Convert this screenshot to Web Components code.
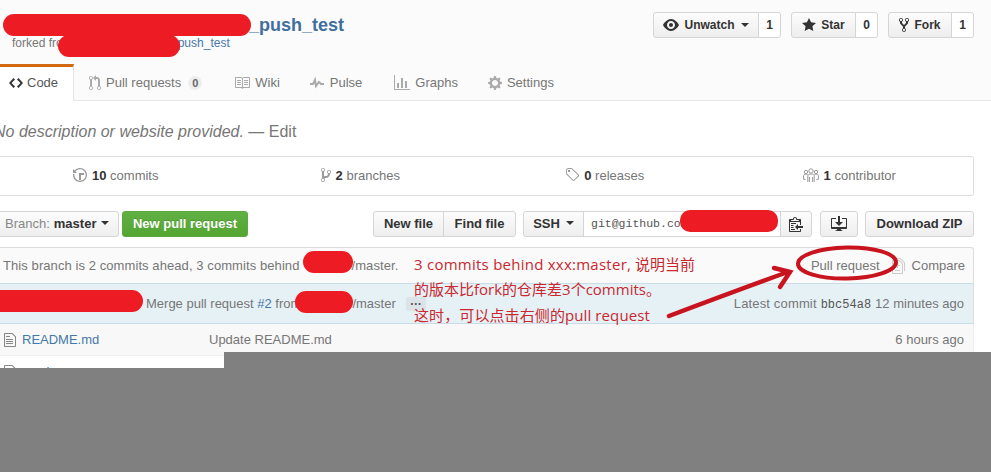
<!DOCTYPE html>
<html lang="en"><head><meta charset="utf-8"><title>push_test</title>
<style>
html,body{margin:0;padding:0;background:#fff}
body{width:991px;height:472px;overflow:hidden;position:relative;font:13px "Liberation Sans",Arial,sans-serif;color:#767676}
</style></head><body>
<x-pagehead>
  <x-title-block slot="title" link="push_test"></x-title-block>
  <x-action slot="actions" icon="eye" count="1" w="106" caret>Unwatch</x-action>
  <x-action slot="actions" icon="star" count="0" w="65">Star</x-action>
  <x-action slot="actions" icon="fork" count="1" w="64">Fork</x-action>
  <x-tab slot="tabs" icon="code" selected>Code</x-tab>
  <x-tab slot="tabs" icon="pr" counter="0">Pull requests</x-tab>
  <x-tab slot="tabs" icon="book">Wiki</x-tab>
  <x-tab slot="tabs" icon="pulse" style="gap:6px;padding-right:17px">Pulse</x-tab>
  <x-tab slot="tabs" icon="graph">Graphs</x-tab>
  <x-tab slot="tabs" icon="gear">Settings</x-tab>
</x-pagehead>
<x-repo>
  <x-desc></x-desc>
  <x-stats>
    <x-stat icon="history"><b>10</b> commits</x-stat>
    <x-stat icon="branch"><b>2</b> branches</x-stat>
    <x-stat icon="tag"><b>0</b> releases</x-stat>
    <x-stat icon="people"><b>1</b> contributor</x-stat>
  </x-stats>
  <x-toolbar></x-toolbar>
  <x-filetable></x-filetable>
</x-repo>
<x-annotations></x-annotations>
<script>
const ICONS={
eye:[16,'M8.06 2C3 2 0 8 0 8s3 6 8.06 6C13 14 16 8 16 8s-3-6-7.94-6zM8 12c-2.2 0-4-1.78-4-4 0-2.2 1.8-4 4-4 2.22 0 4 1.8 4 4 0 2.22-1.78 4-4 4zm2-4c0 1.11-.89 2-2 2-1.11 0-2-.89-2-2 0-1.11.89-2 2-2 1.11 0 2 .89 2 2z'],
star:[14,'M14 6l-4.9-.64L7 1 4.9 5.36 0 6l3.6 3.26L2.67 14 7 11.67 11.33 14l-.93-4.74L14 6z'],
fork:[10,'M8 1a1.993 1.993 0 0 0-1 3.72V6L5 8 3 6V4.72A1.993 1.993 0 0 0 2 1a1.993 1.993 0 0 0-1 3.72V6.5l3 3v1.78A1.993 1.993 0 0 0 5 15a1.993 1.993 0 0 0 1-3.72V9.5l3-3V4.72A1.993 1.993 0 0 0 8 1zM2 4.2C1.34 4.2.8 3.65.8 3c0-.65.55-1.2 1.2-1.2.65 0 1.2.55 1.2 1.2 0 .65-.55 1.2-1.2 1.2zm3 10c-.66 0-1.2-.55-1.2-1.2 0-.65.55-1.2 1.2-1.2.65 0 1.2.55 1.2 1.2 0 .65-.55 1.2-1.2 1.2zm3-10c-.66 0-1.2-.55-1.2-1.2 0-.65.55-1.2 1.2-1.2.65 0 1.2.55 1.2 1.2 0 .65-.55 1.2-1.2 1.2z'],
code:[14,'M9.5 3L8 4.5 11.5 8 8 11.5 9.5 13 14 8 9.5 3zm-5 0L0 8l4.5 5L6 11.5 2.5 8 6 4.5 4.5 3z'],
pr:[12,'M11 11.28V5c-.03-.78-.34-1.47-.94-2.06C9.46 2.35 8.78 2.03 8 2H7V0L4 3l3 3V4h1c.27.02.48.11.69.31.21.2.3.42.31.69v6.28A1.993 1.993 0 0 0 10 15a1.993 1.993 0 0 0 1-3.72zm-1 2.92c-.66 0-1.2-.55-1.2-1.2 0-.65.55-1.2 1.2-1.2.65 0 1.2.55 1.2 1.2 0 .65-.55 1.2-1.2 1.2zM4 3c0-1.11-.89-2-2-2a1.993 1.993 0 0 0-1 3.72v6.56A1.993 1.993 0 0 0 2 15a1.993 1.993 0 0 0 1-3.72V4.72c.59-.34 1-.98 1-1.72zm-.8 10c0 .66-.55 1.2-1.2 1.2-.65 0-1.2-.55-1.2-1.2 0-.65.55-1.2 1.2-1.2.65 0 1.2.55 1.2 1.2zM2 4.2C1.34 4.2.8 3.65.8 3c0-.65.55-1.2 1.2-1.2.65 0 1.2.55 1.2 1.2 0 .65-.55 1.2-1.2 1.2z'],
book:[16,'M3 5h4v1H3V5zm0 3h4V7H3v1zm0 2h4V9H3v1zm11-5h-4v1h4V5zm0 2h-4v1h4V7zm0 2h-4v1h4V9zm2-6v9c0 .55-.45 1-1 1H9.5l-1 1-1-1H2c-.55 0-1-.45-1-1V3c0-.55.45-1 1-1h5.5l1 1 1-1H15c.55 0 1 .45 1 1zm-8 .5L7.5 3H2v9h6V3.5zm7-.5H9.5l-.5.5V12h6V3z'],
pulse:[14,'M11.5 8L8.8 5.4 6.6 8.5 5.5 1.6 2.38 8H0v2h3.6l.9-1.8.9 5.4L9 8.5l1.6 1.5H14V8h-2.5z'],
graph:[16,'M16 14v1H0V0h1v14h15zM5 13H3V8h2v5zm4 0H7V3h2v10zm4 0h-2V6h2v7z'],
gear:[14,'M14 8.77v-1.6l-1.94-.64-.45-1.09.88-1.84-1.13-1.13-1.81.91-1.09-.45-.69-1.92h-1.6l-.63 1.94-1.11.45-1.84-.88-1.13 1.13.91 1.81-.45 1.09L0 7.23v1.59l1.94.64.45 1.09-.88 1.84 1.13 1.13 1.81-.91 1.09.45.69 1.92h1.59l.63-1.94 1.11-.45 1.84.88 1.13-1.13-.92-1.81.47-1.09L14 8.75v.02zM7 11c-1.66 0-3-1.34-3-3s1.34-3 3-3 3 1.34 3 3-1.34 3-3 3z'],
history:[14,'M8 13H6V6h5v2H8v5zM7 1C4.81 1 2.87 2.02 1.59 3.59L0 2v4h4L2.5 4.5C3.55 3.17 5.17 2.3 7 2.3c3.14 0 5.7 2.56 5.7 5.7s-2.56 5.7-5.7 5.7A5.71 5.71 0 0 1 1.3 8c0-.34.03-.67.09-1H.08C.03 7.33 0 7.66 0 8c0 3.86 3.14 7 7 7s7-3.14 7-7-3.14-7-7-7z'],
branch:[10,'M10 5c0-1.11-.89-2-2-2a1.993 1.993 0 0 0-1 3.72v.3c-.02.52-.23.98-.63 1.38-.4.4-.86.61-1.38.63-.83.02-1.48.16-2 .45V4.72a1.993 1.993 0 0 0-1-3.72C.88 1 0 1.89 0 3a2 2 0 0 0 1 1.72v6.56c-.59.35-1 .99-1 1.72 0 1.11.89 2 2 2 1.11 0 2-.89 2-2 0-.53-.2-1-.53-1.36.09-.06.48-.41.59-.47.25-.11.56-.17.94-.17 1.05-.05 1.95-.45 2.75-1.25S8.95 7.77 9 6.73h-.02C9.59 6.37 10 5.73 10 5zM2 1.8c.66 0 1.2.55 1.2 1.2 0 .65-.55 1.2-1.2 1.2C1.35 4.2.8 3.65.8 3c0-.65.55-1.2 1.2-1.2zm0 12.41c-.66 0-1.2-.55-1.2-1.2 0-.65.55-1.2 1.2-1.2.65 0 1.2.55 1.2 1.2 0 .65-.55 1.2-1.2 1.2zm6-8c-.66 0-1.2-.55-1.2-1.2 0-.65.55-1.2 1.2-1.2.65 0 1.2.55 1.2 1.2 0 .65-.55 1.2-1.2 1.2z'],
tag:[14,'M7.73 1.73C7.26 1.26 6.62 1 5.96 1H3.5C2.13 1 1 2.13 1 3.5v2.47c0 .66.27 1.3.73 1.77l6.06 6.06c.39.39 1.02.39 1.41 0l4.59-4.59a.996.996 0 0 0 0-1.41L7.73 1.73zM2.38 7.09c-.31-.3-.47-.7-.47-1.13V3.5c0-.88.72-1.59 1.59-1.59h2.47c.42 0 .83.16 1.13.47l6.14 6.13-4.73 4.73-6.13-6.15zM3.01 3h2v2H3V3h.01z'],
clippy:[14,'M2 13h4v1H2v-1zm5-6H2v1h5V7zm2 3V8l-3 3 3 3v-2h5v-2H9zM4.5 9H2v1h2.5V9zM2 12h2.5v-1H2v1zm9 1h1v2c-.02.28-.11.52-.3.7-.19.18-.42.28-.7.3H1c-.55 0-1-.45-1-1V4c0-.55.45-1 1-1h3c0-1.11.89-2 2-2 1.11 0 2 .89 2 2h3c.55 0 1 .45 1 1v5h-1V6H1v9h10v-2zM2 5h8c0-.55-.45-1-1-1H8c-.55 0-1-.45-1-1s-.45-1-1-1-1 .45-1 1-.45 1-1 1H3c-.55 0-1 .45-1 1z'],
download:[16,'M4 6h3V0h2v6h3l-4 4-4-4zm11-4h-4v1h4v8H1V3h4V2H1c-.55 0-1 .45-1 1v9c0 .55.45 1 1 1h5.34c-.25.61-.86 1.39-2.34 2h8c-1.48-.61-2.09-1.39-2.34-2H15c.55 0 1-.45 1-1V3c0-.55-.45-1-1-1z'],
file:[12,'M6 5H2V4h4v1zM2 8h7V7H2v1zm0 2h7V9H2v1zm0 2h7v-1H2v1zm10-7.5V14c0 .55-.45 1-1 1H1c-.55 0-1-.45-1-1V2c0-.55.45-1 1-1h7.5L12 4.5zM11 5L8 2H1v12h10V5z'],
diff:[13,'M6 7h2v1H6v2H5V8H3V7h2V5h1v2zm-3 6h5v-1H3v1zM7.5 2L11 5.5V15c0 .55-.45 1-1 1H1c-.55 0-1-.45-1-1V3c0-.55.45-1 1-1h6.5zM10 6L7 3H1v12h9V6zM8.5 0H3v1h5l4 4v8h1V4.5L8.5 0z']
};
const PEOPLE='<g fill="none" stroke="currentColor" stroke-width="1"><circle cx="8" cy="4" r="2.2"/><path d="M4.8 15V9.2C4.8 7.6 6 7 8 7s3.2.6 3.2 2.2V15M6.4 10v5M9.6 10v5"/><circle cx="3" cy="5" r="1.7"/><path d="M4.6 7.6C4 7.2 3.6 7.2 3 7.2c-1.4 0-2.4.6-2.4 1.8v3.4h2"/><circle cx="13" cy="5" r="1.7"/><path d="M11.4 7.6c.6-.4 1-.4 1.6-.4 1.4 0 2.4.6 2.4 1.8v3.4h-2"/></g>';
function def(name,css,html,init){
  customElements.define(name,class extends HTMLElement{
    constructor(){super();this.attachShadow({mode:'open'});}
    connectedCallback(){
      const h=typeof html==='function'?html(this):html;
      this.shadowRoot.innerHTML='<style>'+css+'</style>'+h;
      if(init)init(this);
    }
  });
}
const ico=(n,extra='')=>`<x-icon name="${n}" ${extra}></x-icon>`;
def('x-icon',':host{display:inline-flex;flex:none;line-height:0}svg{display:block;fill:currentColor}',
 el=>{
  const n=el.getAttribute('name');
  if(n==='people')return `<svg width="16" height="16" viewBox="0 0 16 16">${PEOPLE}</svg>`;
  const [w,d]=ICONS[n];
  return `<svg width="${w}" height="16" viewBox="0 0 ${w} 16"><path d="${d}"/></svg>`;
 });
def('x-btn',`:host{display:inline-flex;box-sizing:border-box;height:26px;align-items:center;justify-content:center;gap:5px;padding:0 10px 2px;
  font:bold 13px "Liberation Sans",Arial,sans-serif;color:#333;background:linear-gradient(#fcfcfc,#eee);border:1px solid #d5d5d5;border-radius:3px;white-space:nowrap}
  :host([green]){color:#fff;background:linear-gradient(#60b044,#55a532);border-color:#5ca941;text-shadow:0 -1px 0 rgba(0,0,0,.15)}
  :host([small]){font-size:12px;padding-bottom:0}
  :host([l]){border-top-right-radius:0;border-bottom-right-radius:0}
  :host([r]){border-top-left-radius:0;border-bottom-left-radius:0;margin-left:-1px}`,'<slot></slot>');
def('x-caret',':host{display:inline-block;width:0;height:0;border:4px solid transparent;border-top-color:currentColor;border-bottom-width:0;margin-left:1px}','');
def('x-action',`:host{display:flex}
  x-btn{padding:0;border-radius:3px 0 0 3px}
  .c{box-sizing:border-box;height:26px;width:23px;margin-left:-1px;display:flex;align-items:center;justify-content:center;background:#fff;border:1px solid #d5d5d5;border-radius:0 3px 3px 0;font:bold 12px "Liberation Sans",Arial,sans-serif;color:#333}`,
 el=>`<x-btn small style="width:${el.getAttribute('w')}px">${ico(el.getAttribute('icon'))}<slot></slot>${el.hasAttribute('caret')?'<x-caret></x-caret>':''}</x-btn><span class="c">${el.getAttribute('count')}</span>`);
def('x-title-block',`:host{display:block;padding-top:13px}
  .t{font:bold 18px/24px "Liberation Sans",Arial,sans-serif;color:#3f6f9f;padding-left:255px;display:block}
  .s{font:12px/14px "Liberation Sans",Arial,sans-serif;color:#767676;display:flex;padding-left:18px;margin-top:-1px}
  .s a{color:#4878a8;margin-left:105px}`,
 el=>`<span class="t">_push_test</span><span class="s">forked from<a>${el.getAttribute('link')}</a></span>`);
def('x-tab',`:host{display:flex;align-items:center;gap:5px;box-sizing:border-box;height:37px;padding:0 15px;color:#767676;font:13px "Liberation Sans",Arial,sans-serif;white-space:nowrap}
  :host([selected]){background:#fff;color:#555;border-right:1px solid #e5e5e5;border-top:3px solid #d26911;padding-bottom:3px;gap:4px}
  x-icon{color:#aaa}
  :host([selected]) x-icon{color:#333}
  .n{display:inline-block;min-width:14px;box-sizing:border-box;margin:0 2px 0 2px;text-align:center;font:bold 11px/14px "Liberation Sans",Arial,sans-serif;color:#666;background:#eee;border-radius:7px}`,
 el=>`${ico(el.getAttribute('icon'))}<slot></slot>${el.hasAttribute('counter')?`<span class="n">${el.getAttribute('counter')}</span>`:''}`);
def('x-pagehead',`:host{display:block;height:100px;background:#fbfbfb;border-bottom:1px solid #e8e8e8;box-sizing:content-box}
  .w{width:980px;margin-left:-6px}
  .top{display:flex;justify-content:space-between;height:64px}
  .a{display:flex;gap:10px;padding-top:12px;height:26px}
  .tabs{display:flex;height:37px}`,
 `<div class="w"><div class="top"><div><slot name="title"></slot></div><div class="a"><slot name="actions"></slot></div></div><div class="tabs"><slot name="tabs"></slot></div></div>`);
def('x-repo',':host{display:block;width:980px;margin-left:-6px}','<slot></slot>');
def('x-desc',`:host{display:block;height:55px;box-sizing:border-box;padding-top:21px;font:16px/20px "Liberation Sans",Arial,sans-serif;color:#767676;white-space:nowrap}
 em{font-style:italic}`,'<em>No description or website provided.</em> — Edit');
def('x-stats',`:host{display:grid;grid-template-columns:repeat(4,1fr);box-sizing:border-box;height:40px;border:1px solid #ddd;border-radius:3px;background:#fff}`,'<slot></slot>');
def('x-stat',`:host{display:flex;align-items:center;justify-content:center;gap:5px;box-sizing:border-box;padding:0 3px 2px 0;font:13px "Liberation Sans",Arial,sans-serif;color:#767676;white-space:nowrap}
 x-icon{color:#999}::slotted(b){color:#333}`,el=>`${ico(el.getAttribute('icon'))}<span><slot></slot></span>`);
def('x-toolbar',`:host{display:flex;height:26px;margin-top:15px;align-items:center;font:13px "Liberation Sans",Arial,sans-serif}
  .g{display:flex}.sp{flex:1}
  .br{font-weight:normal;width:125px;padding:0 0 2px 10px;color:#333;margin-right:3px;justify-content:flex-start;gap:4px}
  .lbl{color:#888;font-weight:normal}
  .url{box-sizing:border-box;width:198px;height:26px;margin-left:-1px;border:1px solid #d5d5d5;background:#fff;font:11.5px/24px "Liberation Mono",monospace;color:#555;padding-left:7px;overflow:hidden;white-space:nowrap}
  .ic{color:#333}`,
 `<x-btn class="br"><span class="lbl">Branch:</span><b>master</b><x-caret></x-caret></x-btn>
  <x-btn green style="width:126px;padding:0 0 2px">New pull request</x-btn>
  <span class="sp"></span>
  <div class="g" style="margin-right:7px"><x-btn l style="width:71px;padding:0 0 2px">New file</x-btn><x-btn r style="width:73px;padding:0 0 2px">Find file</x-btn></div>
  <div class="g" style="margin-right:8px"><x-btn l style="width:61px;padding:0 0 2px">SSH<x-caret></x-caret></x-btn><div class="url">git@github.com</div><x-btn r style="width:32px;padding:0" class="ic">${ico('clippy')}</x-btn></div>
  <x-btn style="width:38px;padding:0;margin-right:7px" class="ic">${ico('download')}</x-btn>
  <x-btn style="width:109px;padding:0 0 2px">Download ZIP</x-btn>`);
def('x-filetable',`:host{display:block;margin-top:10px;font:13px "Liberation Sans",Arial,sans-serif;color:#767676;white-space:nowrap}
  .row{display:flex;align-items:center;box-sizing:border-box;padding:0 9px}
  .info{height:36px;background:#fafafa;border:1px solid #ddd;border-bottom:0;border-radius:3px 3px 0 0;padding:0 8px}
  .tease{height:41px;background:#e6f1f6;border:1px solid #c9dde8;border-left-color:#ddd;border-right-color:#ddd}
  .f{height:32px;background:#f8f8f8;border:1px solid #eee;border-top:0}
  .w{background:#fff;height:32px;border:1px solid #eee;border-top:0}
  .sp{flex:1}
  .gap{display:inline-block}
  a{color:#4478a8}
  x-icon{color:#888}
  .name{margin-left:6px;width:187px}
  .dots{display:inline-block;width:20px;height:14px;line-height:9px;margin-left:10px;background:#dde4e9;color:#555;text-align:center;font-weight:bold;font-size:12px;border-radius:1px}
  code{font:12px "Liberation Mono",monospace;color:#555;margin:0 4px}
  .lnk{display:flex;align-items:center}
  .dim{color:#d0d0d0;margin:0 7px 0 12px}
  .dim,.dim x-icon{color:#ccc}`,
 `<div class="row info"><span style="letter-spacing:.08px">This branch is 2 commits ahead, 3 commits behind<span class="gap" style="width:52px"></span>/master.</span><span class="sp"></span><span class="lnk">Pull request<span class="dim" style="display:inline-flex">${ico('diff')}</span>Compare</span></div>
  <div class="row tease"><span style="margin-left:142px">Merge pull request <a>#2</a> from<span class="gap" style="width:51px"></span>/master</span><span class="dots">…</span><span class="sp"></span><span><span style="letter-spacing:.15px">Latest commit</span><code>bbc54a8</code>12 minutes ago</span></div>
  <div class="row f">${ico('file')}<span class="name"><a>README.md</a></span><span>Update README.md</span><span class="sp"></span><span>6 hours ago</span></div>
  <div class="row w">${ico('file')}<span class="name"><a>use.h</a></span></div>`);
def('x-annotations',`:host{display:block;position:absolute;left:0;top:0;width:991px;height:472px;pointer-events:none}
  .g1{position:absolute;left:0;top:368px;width:224px;height:104px;background:#808080}
  .g2{position:absolute;left:224px;top:352px;width:767px;height:120px;background:#808080}
  svg{position:absolute;left:0;top:0}
  .n{position:absolute;left:414px;font:15px/20px "Open Sans","Noto Sans CJK SC",sans-serif;color:#c8282e;white-space:nowrap}`,
 `<div class="g1"></div><div class="g2"></div>
  <svg width="991" height="472" viewBox="0 0 991 472">
   <g fill="#ed1c24">
    <rect x="3" y="14" width="248" height="22" rx="11"/>
    <rect x="58" y="35" width="122" height="22" rx="11"/>
    <rect x="680" y="210" width="98" height="22" rx="10"/>
    <rect x="303" y="251" width="50" height="22" rx="11"/>
    <rect x="-10" y="290" width="153" height="22" rx="11"/>
    <rect x="295" y="291" width="58" height="22" rx="11"/>
   </g>
   <ellipse cx="847" cy="263" rx="49" ry="15.5" fill="none" stroke="#c8141e" stroke-width="4" transform="rotate(-1 847 263)"/>
   <path d="M669 316Q730 293 785 273" fill="none" stroke="#c8141e" stroke-width="4.5" stroke-linecap="round"/>
   <path d="M774 268L790 272L780 287" fill="none" stroke="#c8141e" stroke-width="4.5" stroke-linecap="round" stroke-linejoin="miter"/>
  </svg>
  <div class="n" style="top:254px"><span style="letter-spacing:.25px">3 commits behind xxx:master,</span> 说明当前</div>
  <div class="n" style="top:279px">的版本比fork的仓库差3个commits。</div>
  <div class="n" style="top:305px;letter-spacing:.1px">这时，可以点击右侧的pull request</div>`);
</script>
</body></html>
